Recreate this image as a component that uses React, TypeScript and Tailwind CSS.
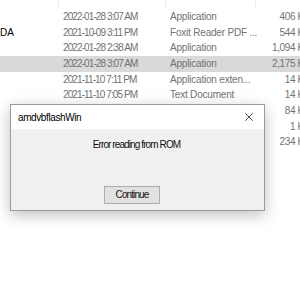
import { X } from "lucide-react";

type Row = { date: string; type: string; size: string; name?: string; selected?: boolean };

const ROWS: Row[] = [
  { date: "2022-01-28 3:07 AM", type: "Application", size: "406 KB" },
  { date: "2021-10-09 3:11 PM", type: "Foxit Reader PDF ...", size: "544 KB", name: "DA" },
  { date: "2022-01-28 2:38 AM", type: "Application", size: "1,094 KB" },
  { date: "2022-01-28 3:07 AM", type: "Application", size: "2,175 KB", selected: true },
  { date: "2021-11-10 7:11 PM", type: "Application exten...", size: "14 KB" },
  { date: "2021-11-10 7:05 PM", type: "Text Document", size: "14 KB" },
  { date: "", type: "", size: "84 KB" },
  { date: "", type: "", size: "1 KB" },
  { date: "", type: "", size: "234 KB" },
];

export default function App() {
  return (
    <div className="relative w-[300px] h-[300px] overflow-hidden bg-white font-['Liberation_Sans',sans-serif]">
      {/* Column header, mostly scrolled off */}
      <div className="relative h-[9px]">
        <span className="absolute left-[58px] top-0 h-[8px] w-px bg-[#ececec]" />
        <span className="absolute left-[165px] top-0 h-[8px] w-px bg-[#ececec]" />
        <span className="absolute left-[255px] top-0 h-[8px] w-px bg-[#ececec]" />
      </div>

      {/* File list rows */}
      <div className="flex flex-col w-[320px]">
        {ROWS.map((row, i) => (
          <div
            key={i}
            className={`flex items-center h-[15.7px] text-[10px] leading-none whitespace-nowrap text-[#727272] ${
              row.selected ? "bg-[#d9d9d9]" : ""
            }`}
          >
            <span className="w-[63px] shrink-0 text-black">{row.name ?? ""}</span>
            <span className="w-[107px] shrink-0 tracking-[-0.9px]">{row.date}</span>
            <span className="w-[95px] shrink-0 overflow-hidden tracking-[-0.2px]">{row.type}</span>
            <span className="w-[45px] shrink-0 text-right tracking-[-0.4px]">{row.size}</span>
          </div>
        ))}
      </div>

      {/* Message box */}
      <div className="absolute left-[10px] top-[104px] w-[255px] h-[107px] flex flex-col border border-[#9a9a9a] bg-[#f0f0f0] shadow-[0_4px_14px_rgba(0,0,0,0.25)]">
        <div className="flex items-center justify-between h-[24px] bg-white pl-[7px] pr-[8px]">
          <span className="text-[10px] tracking-[-0.4px] text-black">amdvbflashWin</span>
          <X size={14} strokeWidth={1.2} className="text-black" />
        </div>
        <div className="flex flex-col items-center pt-[11px] text-[10px] leading-none tracking-[-0.9px] text-[#111]">
          <span className="ml-[-2px]">Error reading from ROM</span>
          <button
            type="button"
            className="mt-[36px] ml-[-11px] w-[56px] h-[18px] border border-[#adadad] bg-[#e1e1e1] text-[10px] leading-none tracking-[-0.9px] text-[#111]"
          >
            Continue
          </button>
        </div>
      </div>
    </div>
  );
}
